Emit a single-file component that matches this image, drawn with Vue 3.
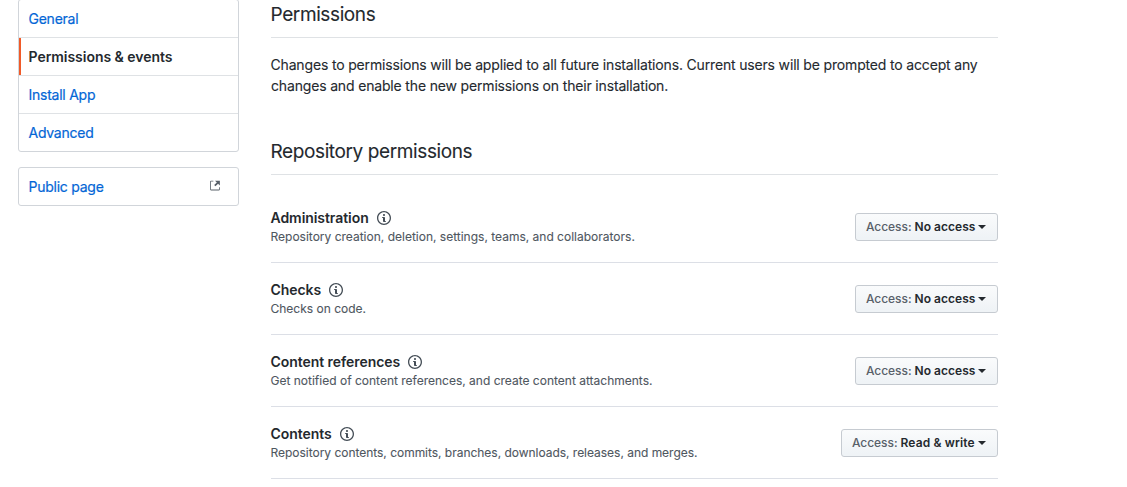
<script setup>
const items = [
  { key: 'administration', title: 'Administration', text: 'Repository creation, deletion, settings, teams, and collaborators.', access: 'No access' },
  { key: 'checks', title: 'Checks', text: 'Checks on code.', access: 'No access' },
  { key: 'references', title: 'Content references', text: 'Get notified of content references, and create content attachments.', access: 'No access' },
  { key: 'contents', title: 'Contents', text: 'Repository contents, commits, branches, downloads, releases, and merges.', access: 'Read & write' },
]
</script>

<template>
  <div class="page">
    <aside>
      <nav class="menu main">
        <a>General</a>
        <a class="selected">Permissions &amp; events</a>
        <a>Install App</a>
        <a>Advanced</a>
      </nav>
      <nav class="menu">
        <a>Public page
          <svg class="ext" width="10" height="13" viewBox="0 0 12 16"><path fill-rule="evenodd" d="M11 10h1v3c0 .55-.45 1-1 1H1c-.55 0-1-.45-1-1V3c0-.55.45-1 1-1h3v1H1v10h10v-3zM6 2l2.25 2.25L5 7.5 6.5 9l3.25-3.25L12 8V2H6z" /></svg>
        </a>
      </nav>
    </aside>
    <main>
      <h2 class="h-perm">Permissions</h2>
      <p>Changes to permissions will be applied to all future installations. Current users will be prompted to accept any<br>changes and enable the new permissions on their installation.</p>
      <h2 class="h-repo">Repository permissions</h2>
      <section v-for="item in items" :key="item.key" :class="item.key">
        <div>
          <h3>{{ item.title }}<svg width="14" height="16" viewBox="0 0 14 16"><path fill-rule="evenodd" d="M6.3 5.69a.942.942 0 0 1-.28-.7c0-.28.09-.52.28-.7.19-.18.42-.28.7-.28.28 0 .52.09.7.28.18.19.28.42.28.7 0 .28-.09.52-.28.7a1 1 0 0 1-.7.3c-.28 0-.52-.11-.7-.3zM8 7.99c-.02-.25-.11-.48-.31-.69-.2-.19-.42-.3-.69-.31H6c-.27.02-.48.13-.69.31-.2.2-.3.44-.31.69h1v3c.02.27.11.5.31.69.2.2.42.31.69.31h1c.27 0 .48-.11.69-.31.2-.19.3-.42.31-.69H8V7.98v.01zM7 2.3c-3.14 0-5.7 2.54-5.7 5.68 0 3.14 2.56 5.7 5.7 5.7s5.7-2.55 5.7-5.7c0-3.15-2.56-5.69-5.7-5.69v.01zM7 .98c3.86 0 7 3.14 7 7s-3.14 7-7 7-7-3.12-7-7 3.14-7 7-7z" /></svg></h3>
          <div class="desc">{{ item.text }}</div>
        </div>
        <button><i>Access:</i> <b>{{ item.access }}</b><span class="caret" /></button>
      </section>
    </main>
  </div>
</template>

<style>
html, body { margin: 0; background: #fff; overflow: hidden; }
</style>
<style scoped>
* { box-sizing: border-box; }
.page { display: flex; gap: 32px; height: 487px; overflow: hidden; padding-left: 18px; font: 400 14px/21px Inter, "Liberation Sans", sans-serif; color: #24292e; }
aside { width: 221px; flex: none; }
.menu { border: 1px solid #d1d5da; border-radius: 3px; margin-bottom: 15px; overflow: hidden; }
.menu.main { margin-top: -1px; }
.menu a { display: flex; align-items: center; justify-content: space-between; height: 38px; padding: 0 18px 0 9.5px; color: #0366d6; letter-spacing: -.25px; -webkit-text-stroke: .2px; border-bottom: 1px solid #dfe2e5; }
.menu a:last-child { border-bottom: 0; height: 37px; }
.menu .selected { color: #24292e; font-weight: 600; letter-spacing: -.04px; -webkit-text-stroke: 0; box-shadow: inset 2px 0 #f05a28; }
.ext { fill: #586069; margin-top: -2px; }
main { width: 727px; }
h2, p, h3, .desc { text-indent: -.5px; }
h2 { margin: 0; font-size: 19px; font-weight: 400; line-height: 29px; letter-spacing: -.39px; -webkit-text-stroke: .1px; border-bottom: 1px solid #dfe2e5; white-space: nowrap; }
.h-perm { height: 38px; }
.h-repo { height: 39px; margin-top: 40px; padding-top: 1px; }
p { margin: 16px 0 0; white-space: nowrap; letter-spacing: -.165px; -webkit-text-stroke: .1px; }
section { display: flex; justify-content: space-between; height: 72px; padding-top: 17px; border-bottom: 1px solid #dcdfe6; }
.administration { height: 88px; padding-top: 33px; }
h3 { display: flex; align-items: center; margin: -1px 0 1px; font-size: 14px; font-weight: 600; height: 20px; letter-spacing: -.06px; }
h3 svg { margin: 2px 0 0 8px; fill: #444d56; }
.desc { font-size: 12px; line-height: 18px; color: #4f575f; white-space: nowrap; -webkit-text-stroke: .1px; }
.contents .desc { letter-spacing: -.025px; }
button { display: flex; align-items: center; height: 28px; width: 143px; margin-top: 5px; padding: 0 11px 0 10px; border: 1px solid #c6cbd1; border-radius: 3px; background: linear-gradient(#fafbfc, #eff3f6 90%); font: 600 12px/18px Inter, sans-serif; color: #24292e; }
.contents button { width: 157px; }
i { font-style: normal; font-weight: 500; color: #586069; margin-right: 3px; letter-spacing: -.05px; }
b { font-weight: 600; letter-spacing: .03px; }
.contents b { letter-spacing: .14px; }
.caret { margin-left: auto; border: 4px solid transparent; border-top-color: #24292e; border-bottom: 0; }
</style>
